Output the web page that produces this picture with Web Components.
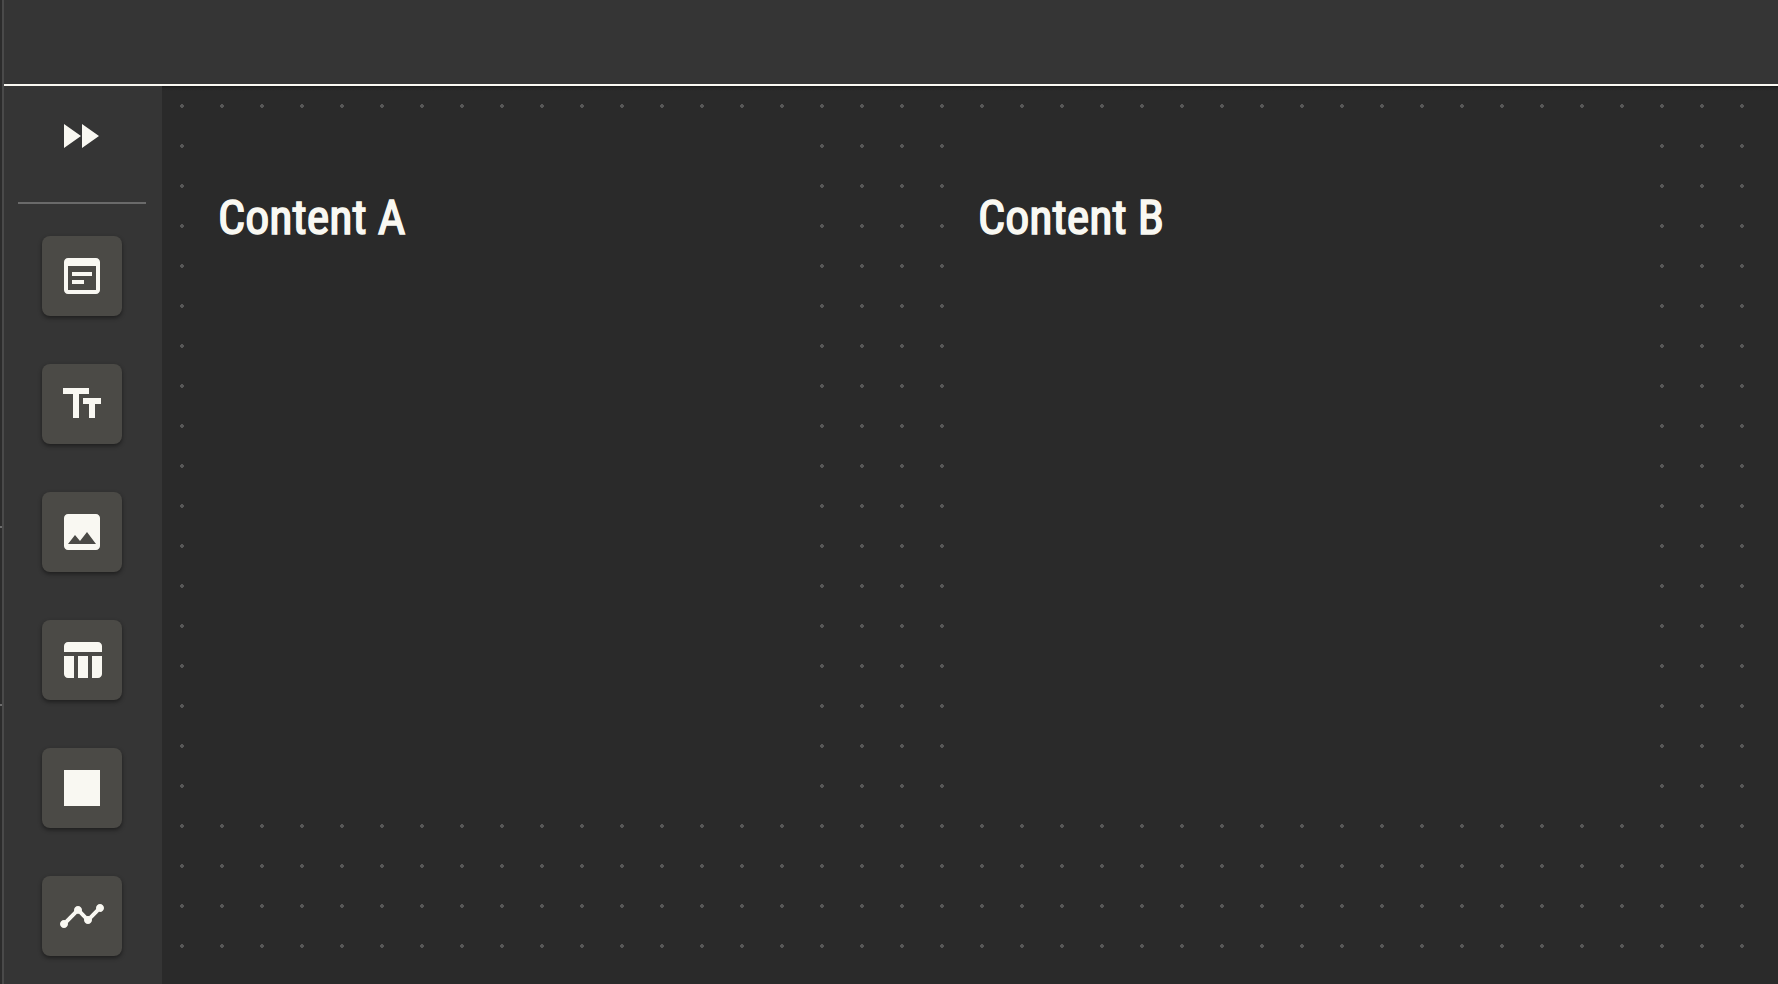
<!DOCTYPE html>
<html lang="en"><head><meta charset="utf-8"><title>Editor</title>
<style>html,body{margin:0;height:100%;overflow:hidden;background:#2a2a2a}</style></head>
<body><board-app></board-app>
<script>
const define=(name,html,init)=>customElements.define(name,class extends HTMLElement{
  constructor(){super();const t=document.createElement('template');t.innerHTML=html;this.attachShadow({mode:'open'}).append(t.content.cloneNode(true));}
  connectedCallback(){if(init)init(this,this.shadowRoot);}
});
const icons={
  forward:'M4 18l8.5-6L4 6v12zm9-12v12l8.5-6L13 6z',
  note:'M19 3H5c-1.11 0-2 .9-2 2v14c0 1.1.89 2 2 2h14c1.1 0 2-.9 2-2V5c0-1.1-.89-2-2-2zm0 16H5V7h14v12zm-2-7H7v-2h10v2zm-4 4H7v-2h6v2z',
  text:'M2.5 4v3h5v12h3V7h5V4h-13zm19 5h-9v3h3v7h3v-7h3V9z',
  image:'M21 19V5c0-1.1-.9-2-2-2H5c-1.1 0-2 .9-2 2v14c0 1.1.9 2 2 2h14c1.1 0 2-.9 2-2zM8.5 13.5l2.5 3.01L14.5 12l4.5 6H5l3.5-4.5z',
  table:'M10 10.02h5V21h-5V10.02zM17 21h3c1.1 0 2-.9 2-2v-9h-5v11zm3-18H5c-1.1 0-2 .9-2 2v3h19V5c0-1.1-.9-2-2-2zM3 19c0 1.1.9 2 2 2h3V10H3v9z',
  square:'M3 3h18v18H3z',
  line:'M23 8c0 1.1-.9 2-2 2-.18 0-.35-.02-.51-.07l-3.56 3.55c.05.16.07.34.07.52 0 1.1-.9 2-2 2s-2-.9-2-2c0-.18.02-.36.07-.52l-2.55-2.55c-.16.05-.34.07-.52.07s-.36-.02-.52-.07l-4.55 4.56c.05.16.07.33.07.51 0 1.1-.9 2-2 2s-2-.9-2-2 .9-2 2-2c.18 0 .35.02.51.07l4.56-4.55C8.02 9.36 8 9.18 8 9c0-1.1.9-2 2-2s2 .9 2 2c0 .18-.02.36-.07.52l2.55 2.55c.16-.05.34-.07.52-.07s.36.02.52.07l3.55-3.56C19.02 8.35 19 8.18 19 8c0-1.1.9-2 2-2s2 .9 2 2z'
};
define('board-icon',`<style>:host{display:block;width:48px;height:48px}svg{display:block;width:100%;height:100%;fill:#f9f8f2}</style><svg viewBox="0 0 24 24"><path/></svg>`,
  (el,root)=>root.querySelector('path').setAttribute('d',icons[el.getAttribute('name')]));
define('tool-button',`<style>:host{display:flex;flex:none;align-items:center;justify-content:center;width:80px;height:80px;border-radius:8px;background:#4b4a46;box-shadow:0 2px 4px rgba(0,0,0,.45)}</style><slot></slot>`);
define('tool-bar',`<style>
:host{display:flex;flex-direction:column;align-items:center;box-sizing:border-box;width:158px;background:#353535;padding:26px 2px 0 0;overflow:hidden}
board-icon.expand{flex:none;margin-right:4px}
hr{flex:none;width:128px;height:2px;margin:42px -2px 32px 14px;align-self:flex-start;border:0;background:#6a6a6a}
.tools{display:flex;flex-direction:column;gap:48px}
</style><board-icon class="expand" name="forward"></board-icon><hr><div class="tools"><slot></slot></div>`);
define('board-panel',`<style>
:host{display:block;box-sizing:border-box;background:#2a2a2a;padding:64px 16px;color:#f9f8f2}
h2{margin:0;font:400 48px/56px "Roboto Condensed",Roboto,sans-serif;font-stretch:75%;white-space:nowrap;-webkit-text-stroke:1.5px #f9f8f2}
</style><h2><slot></slot></h2>`);
define('board-canvas',`<style>
:host{display:grid;grid-template-columns:600px 680px;column-gap:160px;grid-template-rows:680px;padding:40px 0 0 40px;box-sizing:border-box;overflow:hidden;background-color:#2a2a2a;
background-image:linear-gradient(rgba(0,0,0,.4),rgba(0,0,0,.12) 2px,transparent 5px),url("data:image/svg+xml,%3Csvg xmlns='http://www.w3.org/2000/svg' width='40' height='40'%3E%3Cpath d='M19 18h2v1h1v2h-1v1h-2v-1h-1v-2h1z' fill='%23575757'/%3E%3C/svg%3E")}
</style><slot></slot>`);
define('board-app',`<style>
:host{display:grid;grid-template-columns:2px 1fr;height:984px;background:#2a2a2a}
.edge{display:flex;flex-direction:column;padding-top:526px;gap:176px;background:#2c2c2c}
.edge i{height:2px;background:#6d6d6d}
.page{display:flex;flex-direction:column;border-left:2px solid #4a4a4a;min-width:0}
header{height:84px;border-bottom:2px solid #f9f8f2;background:#353535}
main{display:grid;grid-template-columns:158px 1fr;height:898px}
</style><div class="edge"><i></i><i></i></div><div class="page"><header></header><main>
<tool-bar><tool-button><board-icon name="note"></board-icon></tool-button><tool-button><board-icon name="text"></board-icon></tool-button><tool-button><board-icon name="image"></board-icon></tool-button><tool-button><board-icon name="table"></board-icon></tool-button><tool-button><board-icon name="square"></board-icon></tool-button><tool-button><board-icon name="line"></board-icon></tool-button></tool-bar>
<board-canvas><board-panel>Content A</board-panel><board-panel>Content B</board-panel></board-canvas></main></div>`);
</script></body></html>
